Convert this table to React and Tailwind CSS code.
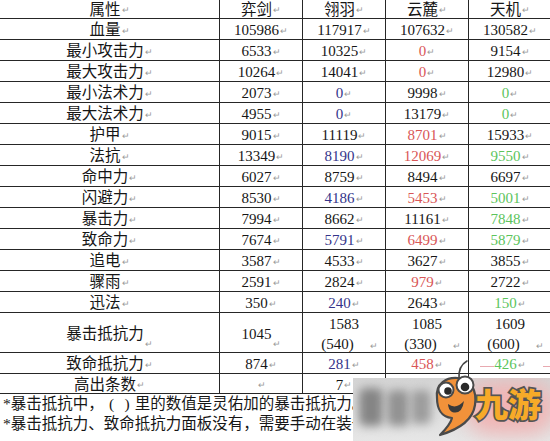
import React from 'react';

const tone = {
  k: 'text-[#161616]',
  b: 'text-[#34348a]',
  r: 'text-[#d95656]',
  g: 'text-[#5cc45c]',
};

// [label, ...[value, tone]]
const rows = [
  ['血量', ['105986', 'k'], ['117917', 'k'], ['107632', 'k'], ['130582', 'k']],
  ['最小攻击力', ['6533', 'k'], ['10325', 'k'], ['0', 'r'], ['9154', 'k']],
  ['最大攻击力', ['10264', 'k'], ['14041', 'k'], ['0', 'r'], ['12980', 'k']],
  ['最小法术力', ['2073', 'k'], ['0', 'b'], ['9998', 'k'], ['0', 'g']],
  ['最大法术力', ['4955', 'k'], ['0', 'b'], ['13179', 'k'], ['0', 'g']],
  ['护甲', ['9015', 'k'], ['11119', 'k'], ['8701', 'r'], ['15933', 'k']],
  ['法抗', ['13349', 'k'], ['8190', 'b'], ['12069', 'r'], ['9550', 'g']],
  ['命中力', ['6027', 'k'], ['8759', 'k'], ['8494', 'k'], ['6697', 'k']],
  ['闪避力', ['8530', 'k'], ['4186', 'b'], ['5453', 'r'], ['5001', 'g']],
  ['暴击力', ['7994', 'k'], ['8662', 'k'], ['11161', 'k'], ['7848', 'g']],
  ['致命力', ['7674', 'k'], ['5791', 'b'], ['6499', 'r'], ['5879', 'g']],
  ['追电', ['3587', 'k'], ['4533', 'k'], ['3627', 'k'], ['3855', 'k']],
  ['骤雨', ['2591', 'k'], ['2824', 'k'], ['979', 'r'], ['2722', 'k']],
  ['迅法', ['350', 'k'], ['240', 'b'], ['2643', 'k'], ['150', 'g']],
];

function Mark() {
  return <span className="text-[9px] text-[#9a9a9a] ml-[1px] self-end mb-[3px] leading-none">↵</span>;
}

function Cell({ first, children, className = '' }) {
  return (
    <div
      className={`${first ? 'w-[220px] text-[15.5px]' : 'w-[83px]'} shrink-0 flex items-center justify-center border-r border-[#262626] pt-[2px] ${className}`}
    >
      {children}
    </div>
  );
}

function Row({ h = 'h-[21px]', children }) {
  return <div className={`flex ${h} border-b border-[#262626]`}>{children}</div>;
}

function Watermark() {
  return (
    <>
      <div className="absolute left-[353px] top-[378px] w-[197px] h-[63px] overflow-hidden bg-gradient-to-b from-[#d4d4d4] to-[#e6e6e6]">
        <div className="absolute left-[6px] top-[10px] w-[24px] h-[38px] rounded-md bg-[#858585] blur-[5px]" />
        <div className="absolute left-[34px] top-[12px] w-[22px] h-[36px] rounded-md bg-[#929292] blur-[5px]" />
        <div className="absolute left-[58px] top-[12px] w-[20px] h-[34px] rounded-md bg-[#9c9c9c] blur-[5px]" />
        <div className="absolute left-[112px] top-[4px] w-[90px] h-[52px] rounded-full bg-[#f0b4b4] blur-[10px]" />
      </div>
      <svg className="absolute left-[428px] top-[358px]" width="54" height="80" viewBox="0 0 54 80">
        <path d="M31 21 Q30 8 39 3" fill="none" stroke="#444" strokeWidth="1.6" strokeLinecap="round" />
        <path
          d="M9 40 C7 25 19 19 30 20 C43 21 49 32 47 47 C45 61 32 71 12 77 C19 70 23 64 24 60 C13 59 9 50 9 40 Z"
          fill="#f2923a"
          stroke="#4a4a4a"
          strokeWidth="2.2"
          strokeLinejoin="round"
        />
        <circle cx="18" cy="32" r="7.5" fill="#fff" stroke="#4a4a4a" strokeWidth="2" />
        <circle cx="20" cy="33" r="3.8" fill="#2a2a2a" />
        <circle cx="37" cy="27" r="8.5" fill="#fff" stroke="#4a4a4a" strokeWidth="2" />
        <circle cx="37" cy="29" r="4.3" fill="#2a2a2a" />
        <path d="M20 46 Q28 52 36 43 Q34 57 24 54 Q20 51 20 46 Z" fill="#3a3a3a" />
      </svg>
      <div className="absolute left-[475px] top-[383px] text-[33px] leading-[40px] font-black text-[#f7aa28] [-webkit-text-stroke:3.5px_#555] [paint-order:stroke_fill] font-['Noto_Sans_CJK_SC',sans-serif]">
        九游
      </div>
      <div className="absolute left-[480px] top-[366px] w-[14px] h-[1px] bg-[#e8a9b0]" />
      <div className="absolute left-[543px] top-[366px] w-[7px] h-[1px] bg-[#e8a9b0]" />
    </>
  );
}

function Paren({ n }) {
  return (
    <div className="flex">
      <span className="inline-block w-[16px] text-right">(</span>
      {n}
      <span className="inline-block w-[20px] text-left">)</span>
      <Mark />
    </div>
  );
}

export default function App() {
  return (
    <div className="relative w-[550px] h-[441px] overflow-hidden bg-white text-[#161616] font-['Liberation_Serif','Noto_Sans_CJK_SC',serif] text-[15px] leading-[20px]">
      <div className="w-[552px]">
        <Row h="h-[19px]">
          <Cell first>属性<Mark /></Cell>
          <Cell className="text-[15.5px]">弈剑<Mark /></Cell>
          <Cell className="text-[15.5px]">翎羽<Mark /></Cell>
          <Cell className="text-[15.5px]">云麓<Mark /></Cell>
          <Cell className="text-[15.5px]">天机<Mark /></Cell>
        </Row>
        {rows.map(([label, ...vals]) => (
          <Row key={label}>
            <Cell first>{label}<Mark /></Cell>
            {vals.map(([v, c], i) => (
              <Cell key={i} className={tone[c]}>{v}<Mark /></Cell>
            ))}
          </Row>
        ))}
        <Row h="h-[40px]">
          <Cell first>暴击抵抗力<Mark /></Cell>
          <Cell>1045<Mark /></Cell>
          {[['1583', '540'], ['1085', '330'], ['1609', '600']].map(([a, b]) => (
            <Cell key={a} className="flex-col pt-0">
              <div>{a}</div>
              <Paren n={b} />
            </Cell>
          ))}
        </Row>
        <Row>
          <Cell first>致命抵抗力<Mark /></Cell>
          <Cell>874<Mark /></Cell>
          <Cell className={tone.b}>281<Mark /></Cell>
          <Cell className={tone.r}>458<Mark /></Cell>
          <Cell className={tone.g}>426<Mark /></Cell>
        </Row>
        <Row h="h-[20px]">
          <Cell first>高出条数<Mark /></Cell>
          <Cell><Mark /></Cell>
          <Cell>7<Mark /></Cell>
          <Cell></Cell>
          <Cell></Cell>
        </Row>
      </div>
      <div className="pl-[3px] text-[15.5px] leading-[20px] whitespace-nowrap">
        <div>
          *暴击抵抗中，
          <span className="inline-block w-[15.5px] text-center">(</span>
          <span className="inline-block w-[15.5px] text-center">)</span>
          里的数值是灵佑加的暴击抵抗力。
        </div>
        <div>*暴击抵抗力、致命抵抗力面板没有，需要手动在装备上计算。</div>
      </div>
      <Watermark />
    </div>
  );
}
